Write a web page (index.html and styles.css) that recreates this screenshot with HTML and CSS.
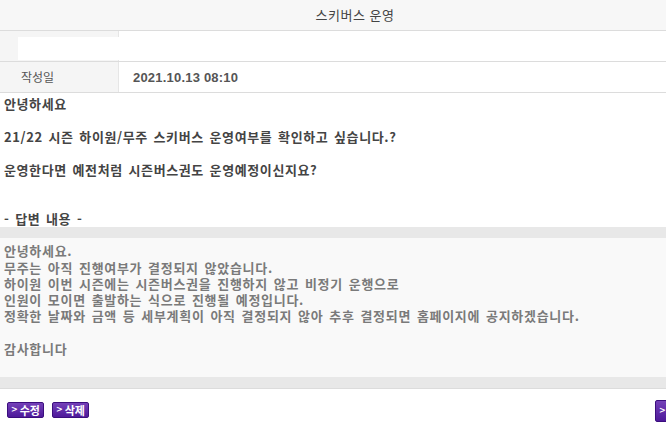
FILE: index.html
```html
<!DOCTYPE html>
<html lang="ko">
<head>
    <meta charset="UTF-8">
    <meta name="viewport" content="width=device-width, initial-scale=1.0">
    <title>스키버스 운영</title>
    <link rel="stylesheet" href="styles.css">
</head>
<body>
    <div class="board">
        <div class="subject">스키버스 운영</div>

        <div class="row">
            <div class="label"><div class="blank"></div></div>
            <div class="value"></div>
        </div>
        <div class="row">
            <div class="label">작성일</div>
            <div class="value"><span class="date">2021.10.13 08:10</span></div>
        </div>

        <div class="question">
            안녕하세요<br><br>
            21/22 시즌 하이원/무주 스키버스 운영여부를 확인하고 싶습니다.?<br><br>
            운영한다면 예전처럼 시즌버스권도 운영예정이신지요?<br><br><br>
            - 답변 내용 -
        </div>

        <div class="reply">
            안녕하세요.<br>
            무주는 아직 진행여부가 결정되지 않았습니다.<br>
            하이원 이번 시즌에는 시즌버스권을 진행하지 않고 비정기 운행으로<br>
            인원이 모이면 출발하는 식으로 진행될 예정입니다.<br>
            정확한 날짜와 금액 등 세부계획이 아직 결정되지 않아 추후 결정되면 홈페이지에 공지하겠습니다.<br>
            <br>
            감사합니다
        </div>

        <div class="actions">
            <div class="left-buttons">
                <button class="btn"><span class="arrow">&gt;</span>수정</button>
                <button class="btn"><span class="arrow">&gt;</span>삭제</button>
            </div>
            <button class="btn btn-list"><span class="arrow">&gt;</span></button>
        </div>
    </div>
</body>
</html>
```

FILE: styles.css
```css
body {
    margin: 0;
    background-color: #fff;
    font-family: "Noto Sans CJK KR", "DejaVu Sans", sans-serif;
    overflow: hidden;
}
.board {
    width: 666px;
}
.subject {
    height: 30px;
    line-height: 30px;
    padding-left: 44px;
    background-color: #f7f7f7;
    border-bottom: 1px solid #dcdcdc;
    font-size: 13px;
    color: #444;
    text-align: center;
    letter-spacing: 0.5px;
}
.row {
    display: flex;
    height: 30px;
    border-bottom: 1px solid #dcdcdc;
}
.label {
    width: 97px;
    flex: none;
    padding-left: 21px;
    background-color: #f5f5f5;
    border-right: 1px solid #e6e6e6;
    font-size: 12px;
    color: #555;
    line-height: 30px;
    position: relative;
}
.blank {
    position: absolute;
    left: 18px;
    top: 6px;
    width: 101px;
    height: 23px;
    background-color: #fff;
}
.value {
    flex: 1;
    line-height: 30px;
    padding-left: 14px;
    font-size: 12px;
    color: #555;
}
.date {
    font-family: "Liberation Sans", sans-serif;
    font-weight: bold;
    font-size: 13px;
    letter-spacing: 0.2px;
}
.question {
    padding: 3px 4px 0;
    font-size: 13px;
    line-height: 16.4px;
    font-weight: bold;
    color: #444;
    letter-spacing: 0.6px;
    word-spacing: 1.5px;
}
.reply {
    border-top: 11px solid #e8e8e8;
    border-bottom: 11px solid #e8e8e8;
    background-color: #f9f9f9;
    padding: 5px 4px 20px;
    font-size: 13px;
    line-height: 16.3px;
    font-weight: bold;
    color: #7a7a7a;
    letter-spacing: 0.7px;
    word-spacing: 1.5px;
    box-shadow: 0 1px 0 #dcdcdc;
}
.actions {
    display: flex;
    justify-content: space-between;
    align-items: flex-start;
    padding: 12px 0 0 7px;
}
.left-buttons {
    display: flex;
    gap: 8px;
    margin-top: 2px;
}
.btn {
    height: 16px;
    padding: 0 3px 0 3px;
    border: 1px solid #3b0e7e;
    border-radius: 2px;
    background: linear-gradient(#7440b8, #4e1a9a);
    color: #fff;
    font-family: "Noto Sans CJK KR", sans-serif;
    font-size: 11px;
    font-weight: bold;
    line-height: 14px;
    display: flex;
    align-items: center;
    cursor: pointer;
}
.arrow {
    font-family: "DejaVu Sans", sans-serif;
    font-size: 8px;
    margin-right: 2px;
}
.btn-list {
    height: 22px;
    width: 16px;
    padding: 0 0 0 3px;
    margin-right: -5px;
}
```
